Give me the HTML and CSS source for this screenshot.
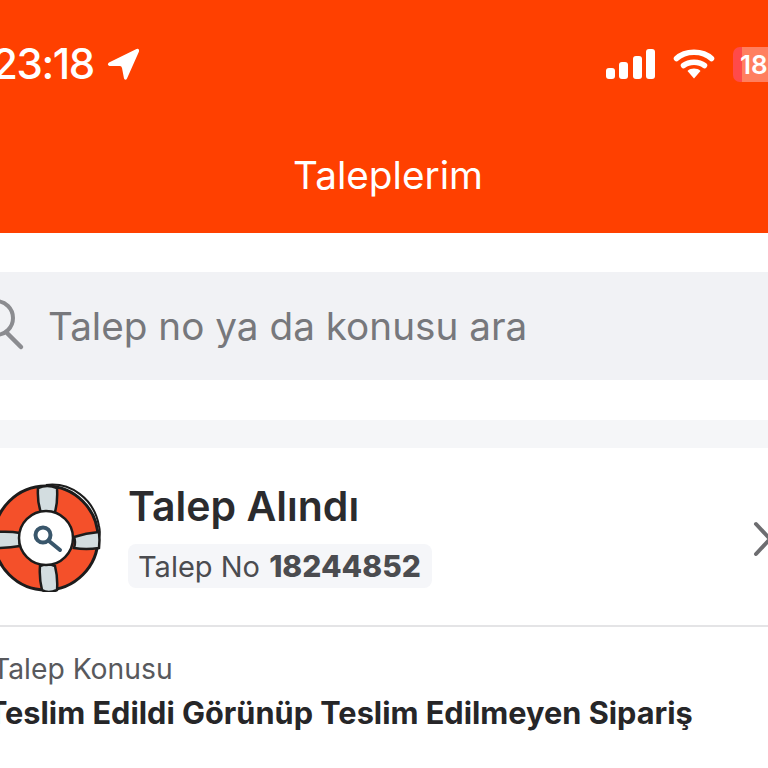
FILE: index.html
```html
<!DOCTYPE html>
<html lang="tr">
<head>
    <meta charset="UTF-8">
    <meta name="viewport" content="width=device-width, initial-scale=1.0">
    <title>Taleplerim</title>
    <link rel="stylesheet" href="styles.css">
</head>
<body>

    <header class="top">
        <div class="status">
            <div class="status-left">
                <span class="time">23:18</span>
                <svg class="arrow" width="33" height="33" viewBox="0 0 33 33">
                    <path d="M2 14.500 L29.500 1 Q32.500 0 32 3.500 L20 30.500 Q18.500 33 17 30.500 L15 20 Q14.500 18 13 18 L2.500 18 Q-0.500 16.500 2 14.500 Z" fill="#fff"/>
                </svg>
            </div>
            <div class="status-right">
                <div class="signal">
                    <i class="bar-1"></i><i class="bar-2"></i><i class="bar-3"></i><i class="bar-4"></i>
                </div>
                <svg class="wifi" width="42" height="32" viewBox="0 0 42 32">
                    <path d="M3.500 10.500 C12 2 30 2 38.500 10.500" fill="none" stroke="#fff" stroke-width="5.500" stroke-linecap="round"/>
                    <path d="M10.500 17.500 C16 13 26 13 31.500 17.500" fill="none" stroke="#fff" stroke-width="5.500" stroke-linecap="round"/>
                    <path d="M14.500 23 C18 19.800 24 19.800 27.500 23 L21 30.500 Z" fill="#fff"/>
                </svg>
                <div class="battery"><span>18</span></div>
            </div>
        </div>
        <h1 class="title">Taleplerim</h1>
    </header>

    <div class="search">
        <svg class="search-icon" width="36" height="56" viewBox="0 0 36 56">
            <circle cx="4" cy="20" r="17" fill="none" stroke="#8b8c90" stroke-width="4"/>
            <path d="M15 35 L29 49" fill="none" stroke="#8b8c90" stroke-width="4.500" stroke-linecap="round"/>
        </svg>
        <span class="search-text">Talep no ya da konusu ara</span>
    </div>

    <div class="band"></div>

    <section class="card">
        <div class="card-head">
            <svg class="buoy" width="110" height="112" viewBox="0 0 110 112">
                <path d="M46 5 C70 2 94 18 99 46 C100 50 100 54 99 58" fill="none" stroke="#1c1c1c" stroke-width="2"/>
                <circle cx="46" cy="58" r="52" fill="#f4502a" stroke="#1c1c1c" stroke-width="3"/>
                <path d="M38 8 Q47 4 57 8 Q58 24 54 35 Q47 33 42 35 Q37 24 38 8 Z" fill="#d3dde0" stroke="#1c1c1c" stroke-width="2.500"/>
                <path d="M40 86 Q48 83 55 86 Q58 98 57 110 Q48 114 42 110 Q39 98 40 86 Z" fill="#d3dde0" stroke="#1c1c1c" stroke-width="2.500"/>
                <path d="M-4 52 Q10 51 20 53 Q19 60 20 66 Q10 68 -4 68 Z" fill="#d3dde0" stroke="#1c1c1c" stroke-width="2.500"/>
                <path d="M74 57 Q86 53 99 52 Q100 60 99 68 Q86 70 74 68 Q76 62 74 57 Z" fill="#d3dde0" stroke="#1c1c1c" stroke-width="2.500"/>
                <circle cx="46" cy="58" r="27" fill="#fff" stroke="#1c1c1c" stroke-width="2.500"/>
                <circle cx="43" cy="55" r="7.500" fill="none" stroke="#39566b" stroke-width="4"/>
                <path d="M49 61 L60 70" fill="none" stroke="#39566b" stroke-width="4" stroke-linecap="round"/>
            </svg>
            <div class="card-info">
                <h2 class="status-name">Talep Alındı</h2>
                <div class="talep-no">Talep No <strong>18244852</strong></div>
            </div>
            <svg class="chevron" width="18" height="36" viewBox="0 0 18 36">
                <path d="M3 3 L17 18 L3 33" fill="none" stroke="#6d6d70" stroke-width="4" stroke-linecap="round" stroke-linejoin="round"/>
            </svg>
        </div>
        <div class="card-body">
            <p class="label">Talep Konusu</p>
            <p class="subject">Teslim Edildi Görünüp Teslim Edilmeyen Sipariş</p>
        </div>
    </section>

</body>
</html>
```

FILE: styles.css
```css
* {
    box-sizing: border-box;
}
html, body {
    height: 768px;
}
body {
    margin: 0;
    overflow: hidden;
    background-color: #fff;
    font-family: Inter, "Noto Sans", sans-serif;
    color: #2b2b2e;
}
.top {
    height: 233px;
    padding-top: 32px;
    background-color: #ff4000;
    color: #fff;
}
.status {
    display: flex;
    justify-content: space-between;
    align-items: center;
    height: 64px;
}
.status-left {
    display: flex;
    align-items: center;
    gap: 13px;
    margin-left: -8px;
}
.time {
    font-size: 42px;
    font-weight: 500;
    letter-spacing: -1.400px;
    line-height: 50px;
}
.arrow {
    display: block;
}
.status-right {
    display: flex;
    align-items: center;
    gap: 18px;
    margin-right: -15px;
}
.signal {
    display: flex;
    align-items: flex-end;
    gap: 4.500px;
    height: 30px;
}
.signal i {
    display: block;
    width: 9px;
    border-radius: 3px;
    background-color: #fff;
}
.bar-1 { height: 11px; }
.bar-2 { height: 17px; }
.bar-3 { height: 23px; }
.bar-4 { height: 30px; }
.battery {
    width: 50px;
    height: 35px;
    border-radius: 7px;
    background: linear-gradient(to right, #ff4a4a 18%, #ff7f5f 18%);
    font-size: 26px;
    font-weight: 600;
    line-height: 35px;
    padding-left: 7px;
}
.title {
    margin: 0 0 0 8px;
    padding-top: 57px;
    text-align: center;
    font-size: 38.700px;
    font-weight: 400;
    line-height: 44px;
}
.search {
    display: flex;
    align-items: center;
    height: 108px;
    margin-top: 39px;
    background-color: #f1f2f5;
}
.search-icon {
    display: block;
    flex-shrink: 0;
    margin-left: -8px;
    margin-right: 20px;
}
.search-text {
    font-size: 38.700px;
    color: #77787c;
}
.band {
    height: 28px;
    margin-top: 40px;
    background-color: #f5f6f8;
}
.card-head {
    display: flex;
    align-items: center;
    height: 179px;
    border-bottom: 2px solid #e4e4e6;
    padding-bottom: 2px;
}
.buoy {
    display: block;
    flex-shrink: 0;
    margin-right: 18px;
}
.card-info {
    flex: 1;
}
.status-name {
    margin: 0;
    font-size: 41px;
    font-weight: 600;
    line-height: 44px;
}
.talep-no {
    display: inline-block;
    margin-top: 16px;
    padding: 0 11px 0 10px;
    height: 44px;
    line-height: 44px;
    border-radius: 8px;
    background-color: #f5f6f9;
    font-size: 29px;
    color: #4b4c50;
}
.talep-no strong {
    margin-left: 1px;
    font-size: 30px;
    font-weight: 800;
}
.chevron {
    display: block;
    flex-shrink: 0;
    margin-right: -3px;
    margin-top: 6px;
}
.card-body {
    padding-top: 24px;
}
.label {
    margin: 0 0 0 -8px;
    font-size: 28.300px;
    line-height: 36px;
    color: #58595d;
}
.subject {
    margin: 8px 0 0 -13px;
    font-size: 30.700px;
    font-weight: 700;
    line-height: 36px;
    color: #262628;
}
```
